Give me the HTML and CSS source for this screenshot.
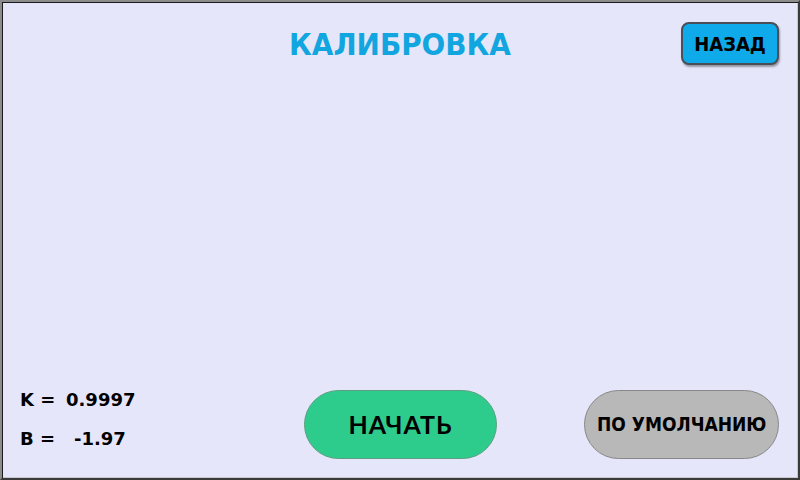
FILE: index.html
```html
<!DOCTYPE html>
<html lang="ru">
<head>
  <meta charset="UTF-8" />
  <title>Калибровка</title>
  <link rel="stylesheet" href="styles.css">
</head>
<body>
  <div class="screen">
    <header class="header">
      <span></span>
      <h1 class="title">КАЛИБРОВКА</h1>
      <button class="back-button">НАЗАД</button>
    </header>

    <footer class="footer">
      <div class="params">
        <div class="param-row">
          <span class="param-label">K =</span>
          <span class="param-value">0.9997</span>
        </div>
        <div class="param-row">
          <span class="param-label">B =</span>
          <span class="param-value param-value-b">-1.97</span>
        </div>
      </div>
      <button class="pill-button start-button">НАЧАТЬ</button>
      <button class="pill-button default-button">ПО УМОЛЧАНИЮ</button>
    </footer>
  </div>
</body>
</html>
```

FILE: styles.css
```css
/* экран панели 800x480 */
body {
  margin: 0;
  font-family: 'DejaVu Sans', sans-serif;
}

.screen {
  width: 800px;
  height: 480px;
  box-sizing: border-box;
  background: #e6e6fa;
  border: 2px solid;
  border-color: #8c8c8c #3a3a3a #3a3a3a #8c8c8c;
  box-shadow: inset 1px 1px 0 #1a1a1a, inset -1px -1px 0 #c8c8cc;
  display: flex;
  flex-direction: column;
}

.header {
  display: grid;
  grid-template-columns: 1fr auto 1fr;
  align-items: center;
  padding: 20px 19px 0 19px;
}

.title {
  margin: 0;
  font-family: 'DejaVu Sans Condensed', 'DejaVu Sans', sans-serif;
  font-weight: bold;
  font-size: 31px;
  color: #12a6e0;
}

.back-button {
  justify-self: end;
  width: 98px;
  height: 43px;
  background: #0eaaea;
  border: 2px solid #4a4e56;
  border-radius: 8px;
  box-shadow: 1px 2px 2px rgba(0, 0, 0, 0.35);
  font-family: 'DejaVu Sans Condensed', 'DejaVu Sans', sans-serif;
  font-weight: bold;
  font-size: 20px;
  color: #000;
  padding: 0;
}

.footer {
  margin-top: auto;
  display: flex;
  align-items: center;
  padding: 0 19px 19px 18px;
}

.params {
  width: 284px;
  display: flex;
  flex-direction: column;
  gap: 18px;
  padding-bottom: 10px;
}

.param-row {
  display: flex;
  font-weight: bold;
  font-size: 18px;
  line-height: 21px;
  color: #000;
}

.param-label {
  width: 46px;
}

.param-value-b {
  padding-left: 8px;
}

.pill-button {
  height: 69px;
  border-radius: 35px;
  padding: 0;
  color: #000;
  font-weight: bold;
}

.start-button {
  width: 194px;
  background: #2ecc8c;
  border: 1px solid #5e9e80;
  font-family: 'Lato', sans-serif;
  font-size: 25px;
  letter-spacing: 1px;
}

.default-button {
  width: 195px;
  margin-left: 87px;
  background: #b8b8b8;
  border: 1px solid #888;
  font-family: 'DejaVu Sans Condensed', 'DejaVu Sans', sans-serif;
  font-size: 19px;
}
```
